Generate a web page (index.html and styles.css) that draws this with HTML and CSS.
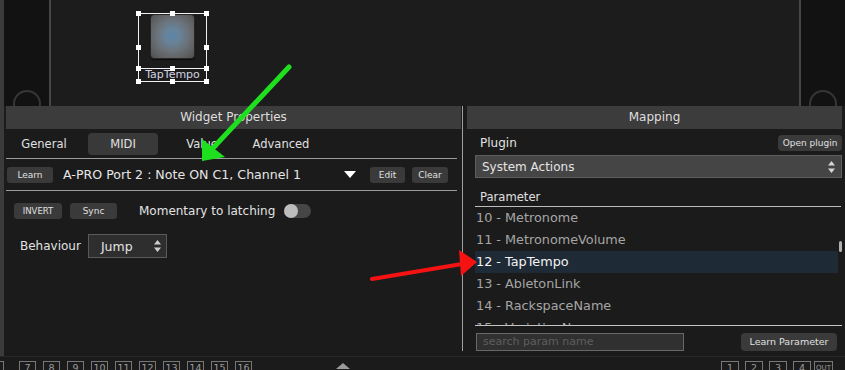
FILE: index.html
```html
<!DOCTYPE html>
<html>
<head>
<meta charset="utf-8">
<link rel="stylesheet" href="styles.css">
</head>
<body>
<div class="top">
  <div class="rail rail-l"><div class="knob"></div></div>
  <div class="canvas">
    <div class="widget">
      <div class="wbox"><div class="pad"></div></div>
      <div class="wlabel">TapTempo</div>
      <span class="h" style="left:0;top:0"></span>
      <span class="h" style="left:34px;top:0"></span>
      <span class="h" style="left:68px;top:0"></span>
      <span class="h" style="left:0;top:34px"></span>
      <span class="h" style="left:68px;top:34px"></span>
      <span class="h" style="left:0;top:55px"></span>
      <span class="h" style="left:34px;top:55px"></span>
      <span class="h" style="left:68px;top:55px"></span>
      <span class="h" style="left:0;top:68px"></span>
      <span class="h" style="left:34px;top:68px"></span>
      <span class="h" style="left:68px;top:68px"></span>
    </div>
  </div>
  <div class="rail rail-r"><div class="knob"></div></div>
</div>

<div class="panels">
  <section class="wp">
    <div class="phead">Widget Properties</div>
    <div class="tabs">
      <div class="tab">General</div>
      <div class="tab on">MIDI</div>
      <div class="tab">Value</div>
      <div class="tab">Advanced</div>
    </div>
    <div class="learnrow">
      <div class="btn b-learn">Learn</div>
      <div class="midi">A-PRO Port 2 : Note ON C1, Channel 1</div>
      <div class="tri"></div>
      <div class="btn b-edit">Edit</div>
      <div class="btn b-clear">Clear</div>
    </div>
    <div class="opts">
      <div class="btn b-inv">INVERT</div>
      <div class="btn b-sync">Sync</div>
      <div class="optlabel">Momentary to latching</div>
      <div class="toggle"><div class="tknob"></div></div>
    </div>
    <div class="beh">
      <div class="behlabel">Behaviour</div>
      <div class="sel small">
        <span>Jump</span>
        <svg class="ud" width="7" height="12" viewBox="0 0 7 12"><path d="M3.5 0L7 4.5H0Z M3.5 12L7 7.5H0Z" fill="#cfcfcf"/></svg>
      </div>
    </div>
  </section>

  <section class="map">
    <div class="phead">Mapping</div>
    <div class="plugrow">
      <div class="plabel-s">Plugin</div>
      <div class="btn b-open">Open plugin</div>
    </div>
    <div class="sel wide">
      <span>System Actions</span>
      <svg class="ud" width="7" height="12" viewBox="0 0 7 12"><path d="M3.5 0L7 4.5H0Z M3.5 12L7 7.5H0Z" fill="#d5d5d5"/></svg>
    </div>
    <div class="paramlabel">Parameter</div>
    <div class="list">
      <div class="rows">
        <div class="row">10 - Metronome</div>
        <div class="row">11 - MetronomeVolume</div>
        <div class="row sel-row">12 - TapTempo</div>
        <div class="row">13 - AbletonLink</div>
        <div class="row">14 - RackspaceName</div>
        <div class="row">15 - VariationName</div>
      </div>
      <div class="sbar"><div class="thumb"></div></div>
    </div>
    <div class="searchrow">
      <div class="search">search param name</div>
      <div class="btn b-lp">Learn Parameter</div>
    </div>
  </section>
</div>

<div class="bottom">
  <div class="nb first">6</div>
  <div class="nb">7</div>
  <div class="nb">8</div>
  <div class="nb">9</div>
  <div class="nb">10</div>
  <div class="nb">11</div>
  <div class="nb">12</div>
  <div class="nb">13</div>
  <div class="nb">14</div>
  <div class="nb">15</div>
  <div class="nb">16</div>
  <div class="uptri"></div>
  <div class="outs">
    <div class="nb o">1</div>
    <div class="nb o">2</div>
    <div class="nb o">3</div>
    <div class="nb o last">4</div>
    <div class="nb out">OUT</div>
  </div>
</div>

<svg class="marks" width="845" height="370" viewBox="0 0 845 370">
  <line x1="289" y1="67" x2="213" y2="148" stroke="#1fe01f" stroke-width="5" stroke-linecap="round"/>
  <polygon points="202,161 202,139 225,157" fill="#1fe01f"/>
  <line x1="372" y1="279" x2="462" y2="264" stroke="#f51212" stroke-width="4" stroke-linecap="round"/>
  <polygon points="477,262 459,250 461,276" fill="#f51212"/>
</svg>
</body>
</html>
```

FILE: styles.css
```css
* { box-sizing: border-box; margin: 0; padding: 0; }
html, body { width: 845px; height: 370px; overflow: hidden; background: #1c1c1c; }
body { font-family: "DejaVu Sans", sans-serif; color: #dcdcdc; position: relative; }

/* top canvas */
.top { display: flex; height: 106px; }
.rail { background: #121212; display: flex; flex-direction: column; justify-content: flex-end; align-items: center; overflow: hidden; }
.rail-l { width: 51px; border-left: 4px solid #3b3b3b; border-right: 2px solid #464646; }
.rail-r { width: 46px; border-left: 2px solid #464646; }
.knob { width: 28px; height: 28px; border: 2px solid #363636; border-radius: 50%; margin-bottom: -12px; flex: none; }
.canvas { flex: 1; background: #1c1c1c; padding: 13px 0 0 87px; }

.widget { position: relative; width: 69px; }
.wbox { height: 56px; border: 1px solid #f2f2f2; }
.pad { width: 45px; height: 45px; margin: 0 auto; border-radius: 4px; border: 1px solid #262626;
  background: radial-gradient(circle at 50% 48%, #5a86aa 0%, #68849b 22%, #6b737b 50%, #5e5e5e 80%, #4e4e4e 100%);
  box-shadow: 0 1px 1px rgba(0,0,0,.6); }
.wlabel { height: 13px; border: 1px solid #f2f2f2; border-top: none; font-size: 11px; line-height: 12px; text-align: center; color: #d2d2e0; white-space: nowrap; }
.h { position: absolute; width: 5px; height: 5px; background: #fff; transform: translate(-2px, -2px); }

/* panels */
.panels { display: flex; height: 250px; border-left: 4px solid #3b3b3b; padding-left: 2px; align-items: flex-start; background: #1b1b1b; }
.phead { height: 23px; background: #3c3c3c; text-align: center; font-size: 12px; line-height: 23px; color: #dedede; }

.wp { width: 455px; height: 249px; }
.tabs { display: flex; gap: 9px; padding: 4px 0 0 3px; height: 30px; border-bottom: 1px solid #9c9c9c; margin-right: 4px; }
.tab { width: 70px; height: 22px; text-align: center; line-height: 22px; font-size: 11.5px; border-radius: 4px; color: #e0e0e0; }
.tab.on { background: #393939; }

.btn { height: 16px; background: #3a3a3a; border-radius: 3px; font-size: 9px; line-height: 16px; text-align: center; color: #e0e0e0; flex: none; }
.learnrow { display: flex; align-items: center; height: 32px; border-bottom: 1px solid #9c9c9c; margin-right: 4px; padding: 0 9px 0 1px; }
.b-learn { width: 46px; }
.midi { margin-left: 10px; flex: 1; font-size: 12.6px; color: #e6e6e6; white-space: nowrap; }
.tri { width: 0; height: 0; border-left: 6.5px solid transparent; border-right: 6.5px solid transparent; border-top: 7px solid #fff; margin-right: 14px; }
.b-edit { width: 35px; margin-right: 7px; }
.b-clear { width: 36px; }

.opts { display: flex; align-items: center; height: 16px; margin-top: 12px; padding-left: 8px; }
.b-inv { width: 48px; margin-right: 8px; font-size: 8.5px; }
.b-sync { width: 47px; margin-right: 22px; }
.optlabel { font-size: 12px; color: #e2e2e2; }
.toggle { width: 27px; height: 14px; border-radius: 7px; background: #464646; margin-left: 9px; }
.tknob { width: 14px; height: 14px; border-radius: 50%; background: #bdbdbd; }

.beh { display: flex; align-items: center; margin-top: 15px; padding-left: 14px; }
.behlabel { font-size: 12px; color: #e2e2e2; }
.sel { display: flex; align-items: center; justify-content: space-between; color: #e4e4e4; }
.sel.small { margin-left: 7px; width: 79px; height: 24px; background: #2e2e2e; border: 1px solid #5a5a5a; padding: 0 5px 0 12px; font-size: 12.5px; }

/* mapping */
.map { flex: 1; margin-left: 1px; border-left: 1px solid #a0a0a0; padding: 0 3px 0 4px; height: 245px; }
.plugrow { display: flex; align-items: center; justify-content: space-between; height: 24px; margin-top: 2px; padding-left: 13px; }
.plabel-s { font-size: 12px; color: #e2e2e2; }
.b-open { width: 64px; border-radius: 4px; }
.sel.wide { margin-left: 8px; height: 23px; background: #454545; border: 1px solid #5e5e5e; padding: 0 6px 0 6px; font-size: 12px; }
.paramlabel { height: 29px; margin: 0 1px 0 8px; padding: 12px 0 0 5px; border-bottom: 1px solid #bdbdbd; font-size: 11.6px; line-height: 15px; color: #e0e0e0; }
.list { display: flex; height: 119px; margin-left: 8px; border-bottom: 1px solid #c4c4c4; overflow: hidden; }
.rows { width: 363px; }
.row { height: 22px; line-height: 22px; padding-left: 1px; font-size: 12.8px; color: #a6a6a6; white-space: nowrap; }
.row.sel-row { background: #1f2a37; color: #f4f4f4; }
.sbar { flex: 1; padding: 34px 0 0 1px; }
.thumb { width: 3px; height: 11px; border-radius: 2px; background: #b0b0b0; }

.searchrow { display: flex; align-items: center; margin-top: 7px; height: 18px; }
.search { margin-left: 9px; width: 208px; height: 18px; background: #303030; border: 1px solid #686868; padding-left: 6px; font-size: 11px; line-height: 16px; color: #5e5e5e; }
.b-lp { margin-left: auto; margin-right: 5px; width: 96px; height: 18px; line-height: 18px; font-size: 9.5px; border-radius: 4px; }

/* bottom strip */
.bottom { display: flex; align-items: flex-start; height: 14px; padding-top: 4px; border-top: 1px solid #272727; background: #1b1b1b; }
.nb { flex: none; width: 17px; height: 14px; border: 1px solid #777; font-size: 9.5px; line-height: 12px; text-align: center; color: #9c9c9c; margin-right: 7px; }
.nb.first { margin-left: -13px; margin-right: 15px; }
.uptri { width: 0; height: 0; border-left: 7.5px solid transparent; border-right: 7.5px solid transparent; border-bottom: 6px solid #9a9a9a; margin: 2px 0 0 77px; }
.outs { display: flex; margin-left: auto; margin-right: 12px; }
.nb.o { width: 18px; margin-right: 6px; }
.nb.o.last { margin-right: 3px; }
.nb.out { width: 19px; margin-right: 0; font-size: 7px; }

.marks { position: absolute; left: 0; top: 0; pointer-events: none; }
```
